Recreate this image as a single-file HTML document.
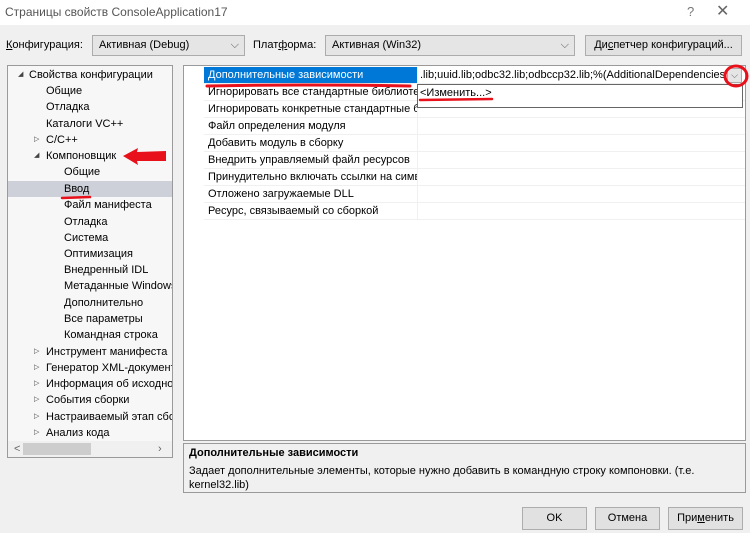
<!DOCTYPE html>
<html><head><meta charset="utf-8"><style>
*{margin:0;padding:0;box-sizing:border-box}
body{width:750px;height:533px;background:#f0f0f0;font-family:"Liberation Sans","DejaVu Sans",sans-serif;font-size:11px;color:#000;position:relative;overflow:hidden}
.a{position:absolute;white-space:nowrap}
.t{position:absolute;height:16px;line-height:16px;white-space:nowrap}
.tri{font-size:7px;color:#444}
.r{position:absolute;left:204px;width:541px;height:17px;line-height:17px;border-bottom:1px solid #f0f0f0;padding-left:4px;white-space:nowrap;overflow:hidden}
.r span{display:inline-block;width:209px;overflow:hidden}
.btn{position:absolute;background:#e1e1e1;border:1px solid #adadad;text-align:center;line-height:20px;height:23px}
.cb{position:absolute;height:21px;border:1px solid #acacac;background:#e5e5e5;line-height:19px;padding-left:6px}
</style></head><body>
<div class="a" style="left:0;top:0;width:750px;height:25px;background:#fff"></div>
<div class="a" style="left:5px;top:5px;font-size:12px;color:#555">Страницы свойств ConsoleApplication17</div>
<div class="a" style="left:687px;top:4px;font-size:13px;color:#777">?</div>
<div class="a" style="left:716px;top:1px;font-size:16px;color:#666">✕</div>

<div class="a" style="left:6px;top:39px"><u>К</u>онфигурация:</div>
<div class="cb" style="left:92px;top:35px;width:153px">Активная (Debug)<span style="position:absolute;right:5px;color:#555">⌵</span></div>
<div class="a" style="left:253px;top:39px">Плат<u>ф</u>орма:</div>
<div class="cb" style="left:325px;top:35px;width:250px">Активная (Win32)<span style="position:absolute;right:5px;color:#555">⌵</span></div>
<div class="btn" style="left:585px;top:35px;width:157px;height:21px;line-height:19px">Ди<u>с</u>петчер конфигураций...</div>

<div class="a" style="left:7px;top:65px;width:166px;height:393px;background:#f7f7f7;border:1px solid #9a9a9a"></div>
<div class="a" style="left:8px;top:181px;width:164px;height:16px;background:#cdd0d8"></div>
<div class="a" style="left:8px;top:441px;width:164px;height:16px;background:#f0f0f0"></div>
<div class="a" style="left:14px;top:443px;color:#666">&lt;</div>
<div class="a" style="left:23px;top:443px;width:68px;height:12px;background:#cdcdcd"></div>
<div class="a" style="left:158px;top:443px;color:#666">›</div>

<div class="t tri" style="left:18px;top:67px">◢</div><div class="t" style="left:29px;top:67px">Свойства конфигурации</div>
<div class="t" style="left:46px;top:83px">Общие</div>
<div class="t" style="left:46px;top:99px">Отладка</div>
<div class="t" style="left:46px;top:116px">Каталоги VC++</div>
<div class="t tri" style="left:34px;top:132px">▷</div><div class="t" style="left:46px;top:132px">C/C++</div>
<div class="t tri" style="left:34px;top:148px">◢</div><div class="t" style="left:46px;top:148px">Компоновщик</div>
<div class="t" style="left:64px;top:164px">Общие</div>
<div class="t" style="left:64px;top:181px">Ввод</div>
<div class="t" style="left:64px;top:197px">Файл манифеста</div>
<div class="t" style="left:64px;top:214px">Отладка</div>
<div class="t" style="left:64px;top:230px">Система</div>
<div class="t" style="left:64px;top:246px">Оптимизация</div>
<div class="t" style="left:64px;top:262px">Внедренный IDL</div>
<div class="t" style="left:64px;top:278px;width:108px;overflow:hidden">Метаданные Windows</div>
<div class="t" style="left:64px;top:295px">Дополнительно</div>
<div class="t" style="left:64px;top:311px">Все параметры</div>
<div class="t" style="left:64px;top:327px">Командная строка</div>
<div class="t tri" style="left:34px;top:344px">▷</div><div class="t" style="left:46px;top:344px">Инструмент манифеста</div>
<div class="t tri" style="left:34px;top:360px">▷</div><div class="t" style="left:46px;top:360px;width:126px;overflow:hidden">Генератор XML-документов</div>
<div class="t tri" style="left:34px;top:376px">▷</div><div class="t" style="left:46px;top:376px;width:126px;overflow:hidden">Информация об исходном</div>
<div class="t tri" style="left:34px;top:392px">▷</div><div class="t" style="left:46px;top:392px">События сборки</div>
<div class="t tri" style="left:34px;top:409px">▷</div><div class="t" style="left:46px;top:409px;width:126px;overflow:hidden">Настраиваемый этап сборки</div>
<div class="t tri" style="left:34px;top:425px">▷</div><div class="t" style="left:46px;top:425px">Анализ кода</div>

<div class="a" style="left:183px;top:65px;width:563px;height:376px;background:#fff;border:1px solid #9a9a9a"></div>
<div class="a" style="left:417px;top:67px;width:1px;height:153px;background:#f0f0f0"></div>
<div class="r" style="top:67px"><span style="background:#0078d7;color:#fff;margin-left:-4px;padding-left:4px;width:213px">Дополнительные зависимости</span></div>
<div class="r" style="top:84px"><span>Игнорировать все стандартные библиотеки</span></div>
<div class="r" style="top:101px"><span>Игнорировать конкретные стандартные библиотеки</span></div>
<div class="r" style="top:118px"><span>Файл определения модуля</span></div>
<div class="r" style="top:135px"><span>Добавить модуль в сборку</span></div>
<div class="r" style="top:152px"><span>Внедрить управляемый файл ресурсов</span></div>
<div class="r" style="top:169px"><span>Принудительно включать ссылки на символы</span></div>
<div class="r" style="top:186px"><span>Отложено загружаемые DLL</span></div>
<div class="r" style="top:203px"><span>Ресурс, связываемый со сборкой</span></div>
<div class="a" style="left:420px;top:67px;width:306px;overflow:hidden;line-height:17px">.lib;uuid.lib;odbc32.lib;odbccp32.lib;%(AdditionalDependencies)</div>
<div class="a" style="left:727px;top:68px;width:15px;height:15px;background:#e5e5e5;border:1px solid #aaa;text-align:center;line-height:13px;font-size:9px;color:#555">⌵</div>
<div class="a" style="left:417px;top:84px;width:326px;height:24px;background:#fff;border:1px solid #666;padding:2px 0 0 2px">&lt;Изменить...&gt;</div>

<div class="a" style="left:183px;top:443px;width:563px;height:50px;background:#f0f0f0;border:1px solid #9a9a9a"></div>
<div class="a" style="left:189px;top:447px;font-weight:bold">Дополнительные зависимости</div>
<div class="a" style="left:189px;top:465px">Задает дополнительные элементы, которые нужно добавить в командную строку компоновки. (т.е.</div>
<div class="a" style="left:189px;top:479px">kernel32.lib)</div>

<div class="btn" style="left:522px;top:507px;width:65px">OK</div>
<div class="btn" style="left:595px;top:507px;width:65px">Отмена</div>
<div class="btn" style="left:668px;top:507px;width:75px">При<u>м</u>енить</div>

<svg class="a" style="left:0;top:0" width="750" height="533">
<g stroke="#e8101a" stroke-linecap="round" fill="none">
<path d="M207 86 Q300 84 410 86" stroke-width="3"/>
<path d="M420 100 L492 99" stroke-width="2.5"/>
<path d="M62 198 L90 197" stroke-width="2.5"/>
<ellipse cx="736" cy="76" rx="11" ry="10" stroke-width="3"/>
</g>
<path d="M123 156 L138 148 L137 152 L166 151 L166 161 L137 161 L138 165 Z" fill="#e8101a"/>
</svg>
</body></html>
